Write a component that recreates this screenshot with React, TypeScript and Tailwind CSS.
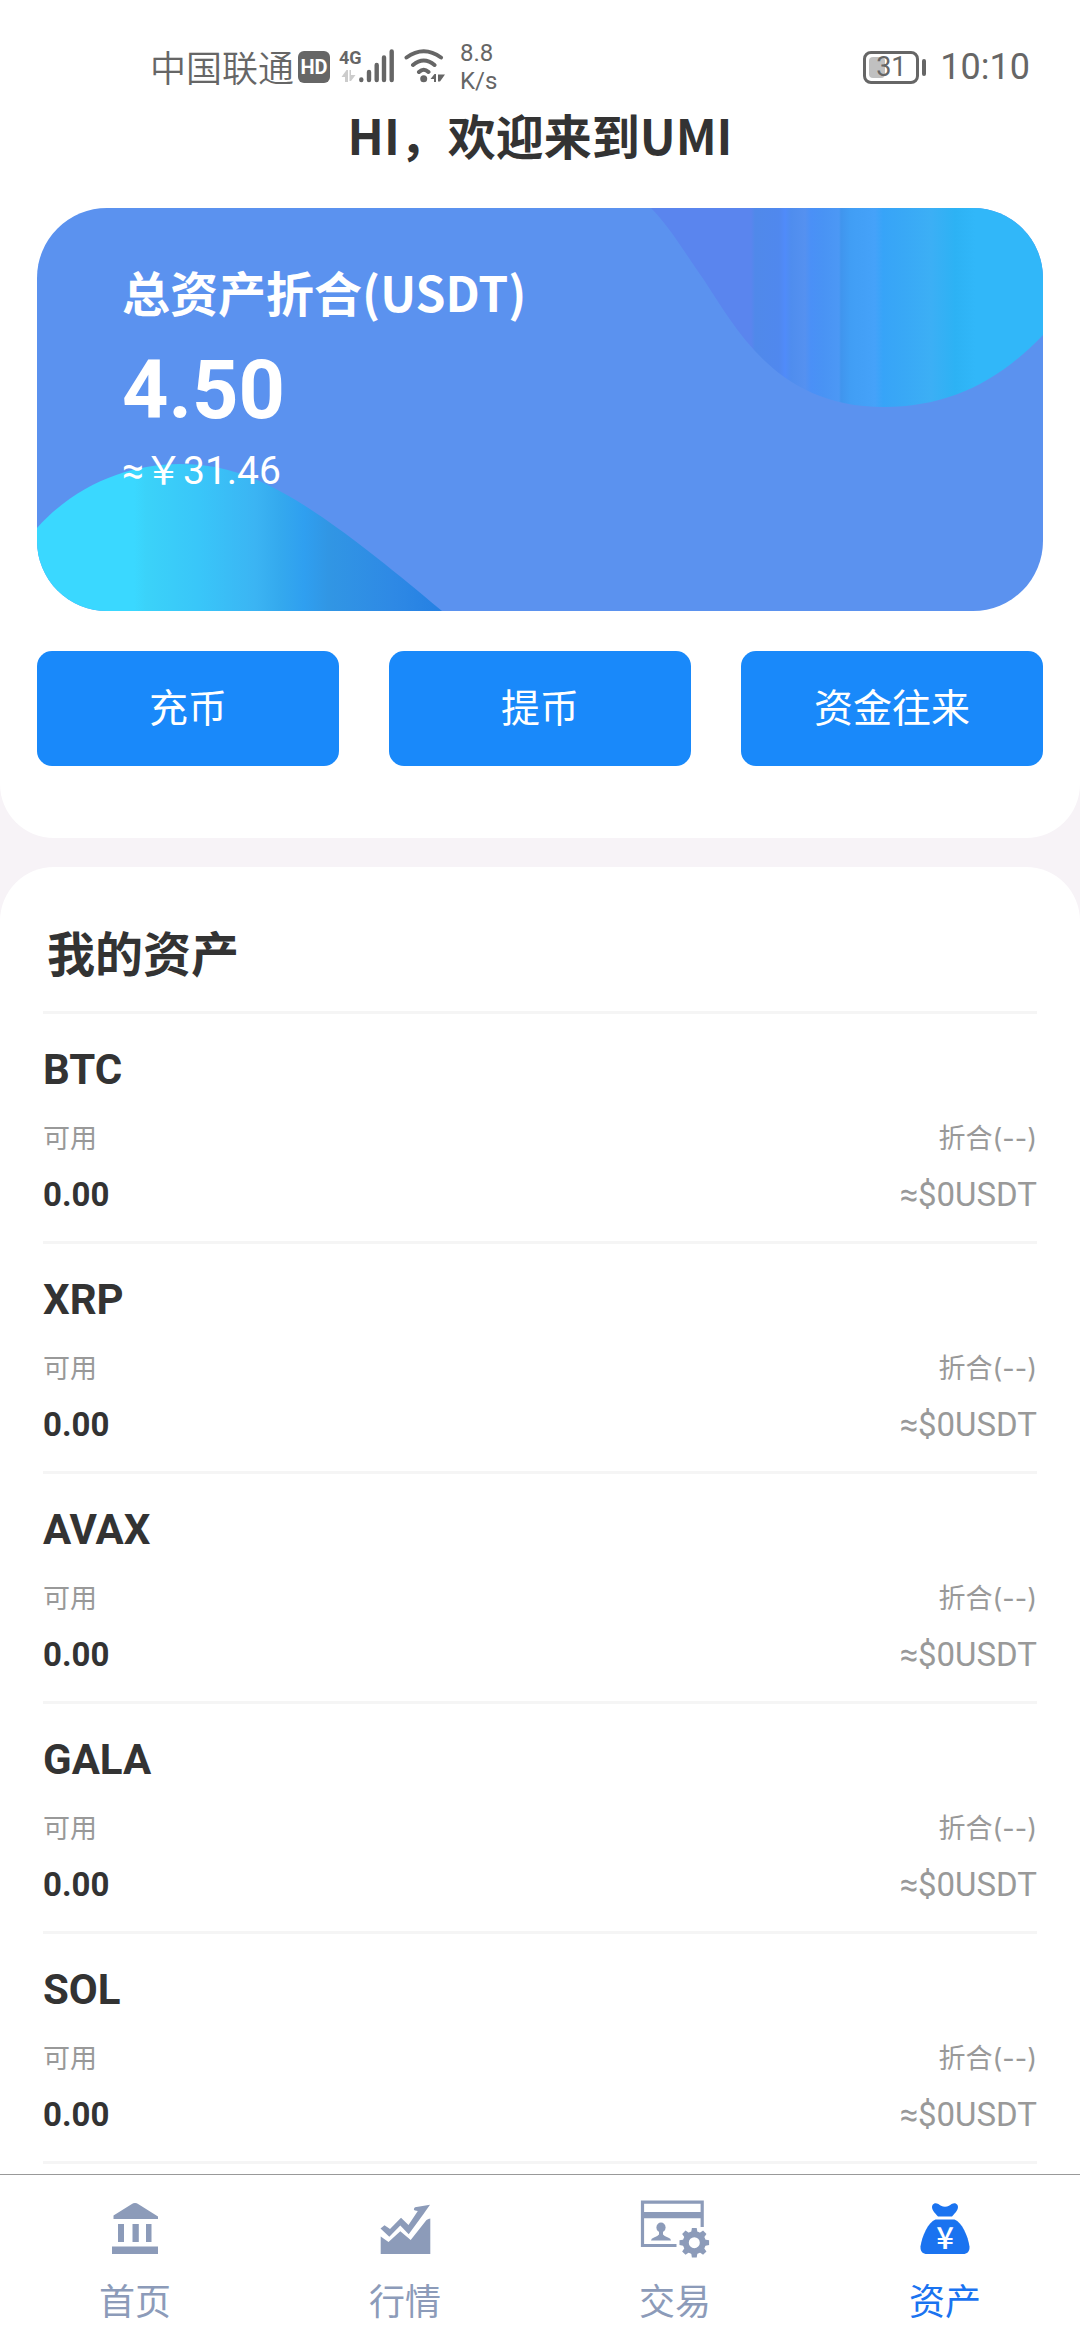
import React, { ReactNode } from 'react';

interface Asset {
    symbol: string;
    available: string;
    converted: string;
}

interface Tab {
    label: string;
    icon: ReactNode;
    active?: boolean;
}

const assets: Asset[] = [
    { symbol: 'BTC', available: '0.00', converted: '≈$0USDT' },
    { symbol: 'XRP', available: '0.00', converted: '≈$0USDT' },
    { symbol: 'AVAX', available: '0.00', converted: '≈$0USDT' },
    { symbol: 'GALA', available: '0.00', converted: '≈$0USDT' },
    { symbol: 'SOL', available: '0.00', converted: '≈$0USDT' },
];

const actions = ['充币', '提币', '资金往来'];

const HomeIcon = () => (
    <svg viewBox="0 0 72 60" className="w-[72px] h-[60px]" fill="currentColor" aria-hidden="true">
        <path d="M14.5 19V15.5L32.5 4.2Q36 2 39.5 4.2L59 16.5V19Z" />
        <path d="M19 24h6v18h-6zM33.5 24h6.3v18h-6.3zM47 24h5.5v18H47zM13 46.5h46V54H13z" />
    </svg>
);

const MarketIcon = () => (
    <svg viewBox="0 0 72 60" className="w-[72px] h-[60px]" fill="currentColor" aria-hidden="true">
        <path d="M11.7 36.5L19.5 42 31.3 31.2 41.7 40 57.5 20Q59.5 18.5 61.3 18.5V54H11.7z" />
        <path d="M61 4.8L46 7.2Q43.8 9.5 46 10.6L48.8 11 39.5 25 32 17.7 21 29 15.5 25.3 11.5 28.5 20.3 36.8 31.3 25.5 39.7 34.2 54.5 14z" />
    </svg>
);

const TradeIcon = () => (
    <svg viewBox="0 0 72 60" className="w-[72px] h-[60px]" fill="currentColor" aria-hidden="true">
        <path d="M37.5 45.5H3.5V2.2H63.2V27" fill="none" stroke="currentColor" strokeWidth="3.2" />
        <path d="M3 12h60v6.2H3z" />
        <ellipse cx="22" cy="27.5" rx="4.6" ry="5" />
        <path d="M20 30h4v4.5q1 1.5 5 3 3 1 3 3H12q0-2 3-3 4-1.5 5-3z" />
        <g transform="translate(55.3 42.7)">
            <circle r="8.5" fill="none" stroke="currentColor" strokeWidth="6" />
            {[0, 45, 90, 135, 180, 225, 270, 315].map((angle) => (
                <path key={angle} d="M-3.2-10L-2.4-14.8H2.4L3.2-10z" transform={`rotate(${angle})`} />
            ))}
        </g>
    </svg>
);

const AssetsIcon = () => (
    <svg viewBox="0 0 72 60" className="w-[72px] h-[60px]" fill="currentColor" aria-hidden="true">
        <path d="M29 16.5C26 13 21.5 9 23.5 5c2.500-3.500 6-1 8.500.700q4 2.300 8 0c2.500-1.700 6-4.200 8.500-.700 2 4-2.500 8-5.500 11.500z" />
        <path d="M26.5 19.5H45.5C53 22.5 59 36 60.5 46.5 61 51.5 58 54 54 54H18C14 54 11 51.5 11.5 46.5 13 36 19 22.5 26.5 19.5z" />
        <text x="36" y="49" textAnchor="middle" fill="#fff" fontSize="31" fontWeight="500">¥</text>
    </svg>
);

const tabs: Tab[] = [
    { label: '首页', icon: <HomeIcon /> },
    { label: '行情', icon: <MarketIcon /> },
    { label: '交易', icon: <TradeIcon /> },
    { label: '资产', icon: <AssetsIcon />, active: true },
];

function StatusBar() {
    return (
        <div className="flex items-center justify-between h-[62px] pl-[150px] pr-[50px] text-[#666]">
            <div className="flex items-center">
                <span className="pb-[3px] text-[36px] leading-[48px] font-[350]">中国联通</span>
                <span className="flex items-center justify-center w-8 h-8 ml-1 rounded-md bg-[#666] text-white font-['Roboto'] text-[20px] leading-8 font-bold">
                    HD
                </span>
                {/* 4G signal */}
                <svg viewBox="0 0 60 36" className="w-[60px] h-9 ml-2 overflow-visible" fill="currentColor" aria-hidden="true">
                    <text x="1" y="15" fontSize="18" fontWeight="700" fontFamily="Roboto">4G</text>
                    <path d="M3.5 28l5-7h1.500v12H7v-5zM11.5 21h1.500v5h4.500l-4.500 6h-1.500z" fill="#ccc" />
                    <path
                        d="M23.3 30.5v.5M31 23v8M38.7 16v15M46 8.5v22.500M53.7 2.5v28.500"
                        stroke="currentColor"
                        strokeWidth="4.4"
                        strokeLinecap="round"
                    />
                </svg>
                {/* Wi-Fi */}
                <svg viewBox="0 0 44 36" className="w-11 h-9 ml-1" fill="none" stroke="currentColor" aria-hidden="true">
                    <path
                        d="M4.5 8.5Q21.7-4 39 8.5M11 16Q21.7 7 32.5 16M17 23Q21.7 18.5 26.5 23"
                        strokeWidth="4"
                        strokeLinecap="round"
                    />
                    <circle cx="21.7" cy="29.7" r="3.5" fill="currentColor" stroke="none" />
                    <path d="M28.5 30l4-5h1.500v8h-2v-3zM36 25.5h7l-5 7h-2z" fill="currentColor" stroke="none" />
                </svg>
                <span className="ml-3.5 font-['Roboto'] text-[24px] leading-7">
                    8.8
                    <br />
                    K/s
                </span>
            </div>
            <div className="flex items-center">
                <span className="relative flex items-center justify-center w-14 h-[33px] border-[3px] border-[#666] rounded-lg">
                    <span className="absolute left-[3px] inset-y-[3px] w-4 rounded-sm bg-[#c0c0c0]" />
                    <span className="relative font-['Roboto'] text-[27px] leading-7">31</span>
                </span>
                <span className="w-1 h-[17px] ml-[3px] rounded-full bg-[#666]" />
                <span className="ml-3.5 font-['Roboto'] text-[36px] leading-[48px]">10:10</span>
            </div>
        </div>
    );
}

function BalanceCard() {
    return (
        <section className="relative overflow-hidden rounded-[70px] bg-[#5b92ef] text-white">
            <svg
                viewBox="0 0 1006 403"
                preserveAspectRatio="none"
                className="absolute inset-0 w-full h-full"
                aria-hidden="true"
            >
                <defs>
                    <linearGradient id="wave-left" gradientUnits="userSpaceOnUse" x1="0" y1="0" x2="405" y2="0">
                        <stop offset="0.24" stopColor="#3ad8ff" />
                        <stop offset="0.27" stopColor="#3bd2f9" />
                        <stop offset="0.4" stopColor="#39c6f9" />
                        <stop offset="0.54" stopColor="#3bb4f3" />
                        <stop offset="0.6" stopColor="#34a9ee" />
                        <stop offset="0.66" stopColor="#2f9ff0" />
                        <stop offset="0.72" stopColor="#3196e4" />
                        <stop offset="0.88" stopColor="#2e89e5" />
                        <stop offset="1" stopColor="#2580e3" />
                    </linearGradient>
                    <linearGradient id="wave-right" gradientUnits="userSpaceOnUse" x1="606" y1="0" x2="1006" y2="0">
                        <stop offset="0.27" stopColor="#5a85ee" />
                        <stop offset="0.28" stopColor="#5089ea" />
                        <stop offset="0.34" stopColor="#5088ee" />
                        <stop offset="0.355" stopColor="#508bfa" />
                        <stop offset="0.37" stopColor="#4f8dee" />
                        <stop offset="0.405" stopColor="#5591f0" />
                        <stop offset="0.42" stopColor="#4a90f7" />
                        <stop offset="0.45" stopColor="#4993f4" />
                        <stop offset="0.49" stopColor="#4c98f5" />
                        <stop offset="0.495" stopColor="#4095ee" />
                        <stop offset="0.52" stopColor="#419ef5" />
                        <stop offset="0.58" stopColor="#45a2f9" />
                        <stop offset="0.6" stopColor="#37a4f8" />
                        <stop offset="0.65" stopColor="#39a8f6" />
                        <stop offset="0.72" stopColor="#3caff5" />
                        <stop offset="0.78" stopColor="#2db2f4" />
                        <stop offset="0.83" stopColor="#31b7f9" />
                    </linearGradient>
                </defs>
                <path d="M0 320C40 275 95 256 142 256C215 256 270 290 405 403H0Z" fill="url(#wave-left)" />
                <path d="M614 0C632 18 648 45 667 72C700 122 740 199 847 199C910 199 960 175 1006 127V0Z" fill="url(#wave-right)" />
            </svg>
            <div className="relative px-[85px] pt-[47px] pb-[110px]">
                <h2 className="text-[48px] leading-[72px] font-bold">总资产折合(USDT)</h2>
                <p className="mt-4 font-['Roboto'] text-[81px] leading-[96px] font-bold">4.50</p>
                <p className="mt-0.5 font-['Roboto','Noto_Sans_CJK_SC',sans-serif] text-[39px] leading-[60px]">≈￥31.46</p>
            </div>
        </section>
    );
}

function AssetRow({ asset }: { asset: Asset }) {
    return (
        <li className="pt-[26px] pb-[22px] border-b-3 border-[#f5f5f5] font-['Roboto','Noto_Sans_CJK_SC',sans-serif]">
            <h3 className="text-[42px] leading-[60px] font-bold text-[#333]">{asset.symbol}</h3>
            <div className="flex justify-between mt-[19px] text-[27px] leading-10 text-[#999] font-['Inter','Noto_Sans_CJK_SC',sans-serif]">
                <span>可用</span>
                <span>折合(--)</span>
            </div>
            <div className="flex justify-between mt-3 text-[33px] leading-[48px]">
                <span className="font-bold text-[#333]">{asset.available}</span>
                <span className="text-[#999]">{asset.converted}</span>
            </div>
        </li>
    );
}

export default function App() {
    return (
        <div className="flex flex-col h-screen bg-[#f7f3f7] font-['Noto_Sans_CJK_SC',sans-serif]">
            <main className="flex flex-col flex-1 min-h-0 overflow-y-auto">
                <header className="pt-9 pb-[72px] bg-white rounded-b-[54px]">
                    <StatusBar />
                    <h1 className="text-center text-[48px] leading-[72px] font-bold text-[#333]">HI，欢迎来到UMI</h1>
                    <div className="px-[37px] mt-[38px]">
                        <BalanceCard />
                        <div className="grid grid-cols-3 gap-[50px] mt-10">
                            {actions.map((label) => (
                                <button
                                    key={label}
                                    type="button"
                                    className="h-[115px] pb-2 rounded-[15px] bg-[#1989fa] text-[39px] leading-[60px] text-white"
                                >
                                    {label}
                                </button>
                            ))}
                        </div>
                    </div>
                </header>

                <section className="flex-1 mt-[29px] px-[43px] pt-12 bg-white rounded-t-[54px]">
                    <h2 className="pb-6 pl-1 border-b-3 border-[#f5f5f5] text-[48px] leading-[72px] font-bold text-[#333]">
                        我的资产
                    </h2>
                    <ul>
                        {assets.map((asset) => (
                            <AssetRow key={asset.symbol} asset={asset} />
                        ))}
                    </ul>
                </section>
            </main>

            <nav className="grid grid-cols-4 pt-[25px] pb-[15px] bg-white border-t border-[#999]">
                {tabs.map((tab) => (
                    <a
                        key={tab.label}
                        href="#"
                        aria-current={tab.active ? 'page' : undefined}
                        className={`flex flex-col items-center ${tab.active ? 'text-[#1a73f0]' : 'text-[#8c9bb9]'}`}
                    >
                        {tab.icon}
                        <span className="mt-[13px] text-[36px] leading-[52px]">{tab.label}</span>
                    </a>
                ))}
            </nav>
        </div>
    );
}
